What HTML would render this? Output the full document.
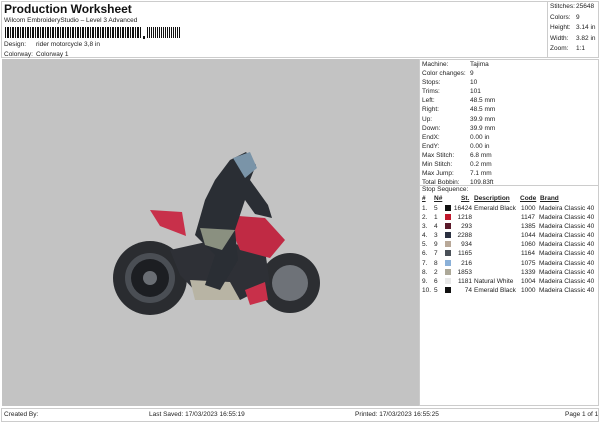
<!DOCTYPE html>
<html><head><style>
body{margin:0;width:600px;height:424px;background:#fff;font-family:"Liberation Sans",sans-serif;font-size:6.5px;color:#222;position:relative;overflow:hidden}
.a{position:absolute;white-space:nowrap}
</style></head><body>
<div class="a" style="left:1px;top:1px;width:598px;height:57px;border:1px solid #ccc;box-sizing:border-box"></div>
<div class="a" style="left:547px;top:1px;width:1px;height:57px;background:#ccc"></div>
<div class="a" style="left:4px;top:2px;font-size:12px;font-weight:bold;color:#111">Production Worksheet</div>
<div class="a" style="left:4px;top:17px">Wilcom EmbroideryStudio – Level 3 Advanced</div>
<div class="a" style="left:5px;top:27px;width:137px;height:11px;background:repeating-linear-gradient(90deg,#111 0 1px,#fff 1px 2px,#111 2px 3px,#111 3px 4px,#fff 4px 5px)"></div>
<div class="a" style="left:143px;top:36px;width:2px;height:3px;background:#111"></div>
<div class="a" style="left:147px;top:27px;width:34px;height:11px;background:repeating-linear-gradient(90deg,#111 0 1px,#fff 1px 2px,#111 2px 3px,#fff 3px 4px)"></div>
<div class="a" style="left:4px;top:41px">Design:</div><div class="a" style="left:36px;top:41px">rider motorcycle 3,8 in</div>
<div class="a" style="left:4px;top:51px">Colorway:</div><div class="a" style="left:36px;top:51px">Colorway 1</div>
<div class="a" style="left:550px;top:2px;line-height:10.5px">Stitches:<br>Colors:<br>Height:<br>Width:<br>Zoom:</div>
<div class="a" style="left:576px;top:2px;line-height:10.5px">25648<br>9<br>3.14 in<br>3.82 in<br>1:1</div>
<div class="a" style="left:2px;top:59px;width:417px;height:347px;background:#c3c3c3"></div>
<div class="a" style="left:419px;top:59px;width:180px;height:347px;border:1px solid #ccc;box-sizing:border-box"></div>
<div class="a" style="left:420px;top:185px;width:178px;height:1px;background:#ccc"></div>
<div class="a" style="left:422px;top:60px;line-height:9.1px">Machine:<br>Color changes:<br>Stops:<br>Trims:<br>Left:<br>Right:<br>Up:<br>Down:<br>EndX:<br>EndY:<br>Max Stitch:<br>Min Stitch:<br>Max Jump:<br>Total Bobbin:</div>
<div class="a" style="left:470px;top:60px;line-height:9.1px">Tajima<br>9<br>10<br>101<br>48.5 mm<br>48.5 mm<br>39.9 mm<br>39.9 mm<br>0.00 in<br>0.00 in<br>6.8 mm<br>0.2 mm<br>7.1 mm<br>109.83ft</div>
<div class="a" style="left:422px;top:186px">Stop Sequence:</div>
<div class="a" style="left:422px;top:195px;font-weight:bold;text-decoration:underline">#</div>
<div class="a" style="left:434px;top:195px;font-weight:bold;text-decoration:underline">N#</div>
<div class="a" style="left:461px;top:195px;font-weight:bold;text-decoration:underline">St.</div>
<div class="a" style="left:474px;top:195px;font-weight:bold;text-decoration:underline">Description</div>
<div class="a" style="left:520px;top:195px;font-weight:bold;text-decoration:underline">Code</div>
<div class="a" style="left:540px;top:195px;font-weight:bold;text-decoration:underline">Brand</div>
<div class="a" style="left:422px;top:204px;line-height:9.1px">1.<br>2.<br>3.<br>4.<br>5.<br>6.<br>7.<br>8.<br>9.<br>10.</div>
<div class="a" style="left:434px;top:204px;line-height:9.1px">5<br>1<br>4<br>3<br>9<br>7<br>8<br>2<br>6<br>5</div>
<div class="a" style="left:445px;top:205px;line-height:9.1px">
<div style="width:6px;height:6px;margin-bottom:3.1px;background:#111"></div><div style="width:6px;height:6px;margin-bottom:3.1px;background:#c0182c"></div><div style="width:6px;height:6px;margin-bottom:3.1px;background:#5a1a2a"></div><div style="width:6px;height:6px;margin-bottom:3.1px;background:#2a3040"></div><div style="width:6px;height:6px;margin-bottom:3.1px;background:#b8a898"></div><div style="width:6px;height:6px;margin-bottom:3.1px;background:#4a5058"></div><div style="width:6px;height:6px;margin-bottom:3.1px;background:#8ab0d8"></div><div style="width:6px;height:6px;margin-bottom:3.1px;background:#aca898"></div><div style="width:6px;height:6px;margin-bottom:3.1px;background:#e8e8e8"></div><div style="width:6px;height:6px;background:#111"></div></div>
<div class="a" style="left:451px;top:204px;width:21px;text-align:right;line-height:9.1px">16424<br>1218<br>293<br>2288<br>934<br>1165<br>216<br>1853<br>1181<br>74</div>
<div class="a" style="left:474px;top:204px;line-height:9.1px">Emerald Black<br><br><br><br><br><br><br><br>Natural White<br>Emerald Black</div>
<div class="a" style="left:521px;top:204px;line-height:9.1px">1000<br>1147<br>1385<br>1044<br>1060<br>1164<br>1075<br>1339<br>1004<br>1000</div>
<div class="a" style="left:539px;top:204px;line-height:9.1px">Madeira Classic 40<br>Madeira Classic 40<br>Madeira Classic 40<br>Madeira Classic 40<br>Madeira Classic 40<br>Madeira Classic 40<br>Madeira Classic 40<br>Madeira Classic 40<br>Madeira Classic 40<br>Madeira Classic 40</div>
<svg class="a" style="left:0;top:0" width="420" height="406">
<path d="M150 210 L182 212 L186 236 L160 226Z" fill="#c8304a"/>
<circle cx="150" cy="278" r="37" fill="#2a2c30"/>
<circle cx="150" cy="278" r="25" fill="#4a4e54"/>
<circle cx="150" cy="278" r="19" fill="#1c1e22"/>
<circle cx="150" cy="278" r="7" fill="#6a6e74"/>
<circle cx="290" cy="283" r="30" fill="#2c2e32"/>
<circle cx="290" cy="283" r="18" fill="#6e7278"/>
<path d="M170 250 L215 240 L265 250 L270 285 L240 300 L200 296 L180 275Z" fill="#2e3036"/>
<path d="M225 215 L265 218 L285 240 L270 258 L240 250Z" fill="#c02a44"/>
<path d="M245 290 L265 282 L268 300 L250 305Z" fill="#c8304a"/>
<path d="M190 280 L230 282 L240 300 L195 300Z" fill="#b8b4a4"/>
<path d="M230 160 L246 152 L256 165 L250 180 L268 205 L272 218 L255 214 L245 200 L235 230 L238 260 L220 290 L205 285 L215 255 L195 235 L205 200 L215 180Z" fill="#2a2e34"/>
<path d="M233 158 L250 152 L257 168 L245 178Z" fill="#7a94a8"/>
<path d="M200 228 L235 230 L222 250 L205 245Z" fill="#8a9080"/>
</svg>
<div class="a" style="left:1px;top:408px;width:598px;height:14px;border:1px solid #ccc;box-sizing:border-box"></div>
<div class="a" style="left:4px;top:411px">Created By:</div>
<div class="a" style="left:149px;top:411px">Last Saved: 17/03/2023 16:55:19</div>
<div class="a" style="left:355px;top:411px">Printed: 17/03/2023 16:55:25</div>
<div class="a" style="left:565px;top:411px">Page 1 of 1</div>
</body></html>
